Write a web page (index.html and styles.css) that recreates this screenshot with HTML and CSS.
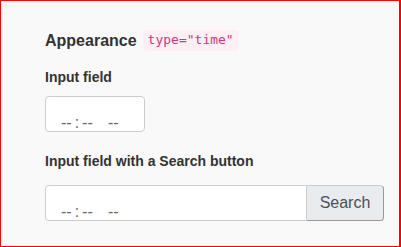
FILE: index.html
```html
<!DOCTYPE html>
<html lang="en">

<head>
    <title>Time input</title>
    <meta charset="UTF-8" />
    <meta name="viewport" content="width=device-width, initial-scale=1.0" />
    <link rel="stylesheet" href="styles.css">
</head>

<body>
    <main class="frame">
        <h2 class="heading">Appearance <code class="code">type="time"</code></h2>

        <label class="field-label" for="timeInput">Input field</label>
        <input class="time-input" type="time" id="timeInput" />

        <label class="field-label second" for="timeSearch">Input field with a Search button</label>
        <div class="input-group">
            <input class="time-input grow" type="time" id="timeSearch" />
            <button class="search-button" type="button">Search</button>
        </div>
    </main>
</body>

</html>
```

FILE: styles.css
```css
html,
body {
    margin: 0;
    padding: 0;
}

body {
    font-family: "Liberation Sans", Arial, sans-serif;
    color: #333;
}

.frame {
    box-sizing: border-box;
    width: 401px;
    height: 247px;
    border: 1px solid #f00;
    border-right-width: 2px;
    background-color: #f9f9f9;
    padding: 29px 16px 0 44px;
    display: flex;
    flex-direction: column;
    align-items: flex-start;
}

.heading {
    display: flex;
    align-items: center;
    gap: 6px;
    margin: 0;
    font-size: 16px;
    line-height: 21px;
    font-weight: bold;
}

.code {
    font-family: "DejaVu Sans Mono", "Liberation Mono", monospace;
    font-size: 13px;
    line-height: 16px;
    font-weight: normal;
    color: #d63384;
    background-color: #fcf0f5;
    border-radius: 4px;
    padding: 2px 5px 3px 5px;
}

.field-label {
    display: block;
    margin: 16px 0 9px 0;
    font-size: 14px;
    line-height: 20px;
    font-weight: bold;
}

.field-label.second {
    margin: 19px 0 14px 0;
}

.time-input {
    box-sizing: border-box;
    width: 100px;
    height: 36px;
    margin: 0;
    padding: 17px 6px 0 14px;
    border: 1px solid #ccc;
    border-radius: 4px;
    background-color: #fff;
    font-family: "Liberation Sans", Arial, sans-serif;
    font-size: 16px;
    color: #666;
}

.time-input::-webkit-datetime-edit-text {
    padding: 0 2px;
}

.time-input::-webkit-datetime-edit-ampm-field {
    margin-left: 6px;
}

.time-input::-webkit-calendar-picker-indicator {
    display: none;
}

.input-group {
    display: flex;
    width: 339px;
}

.grow {
    flex: 1;
    border-radius: 4px 0 0 4px;
}

.search-button {
    box-sizing: border-box;
    height: 36px;
    width: 77px;
    margin: 0;
    padding: 0 12px;
    border: 1px solid #ccc;
    border-left: none;
    border-right-color: #999;
    border-bottom-color: #999;
    border-radius: 0 4px 4px 0;
    background-color: #e9ecef;
    color: #495057;
    font-family: "Liberation Sans", Arial, sans-serif;
    font-size: 16px;
}
```
